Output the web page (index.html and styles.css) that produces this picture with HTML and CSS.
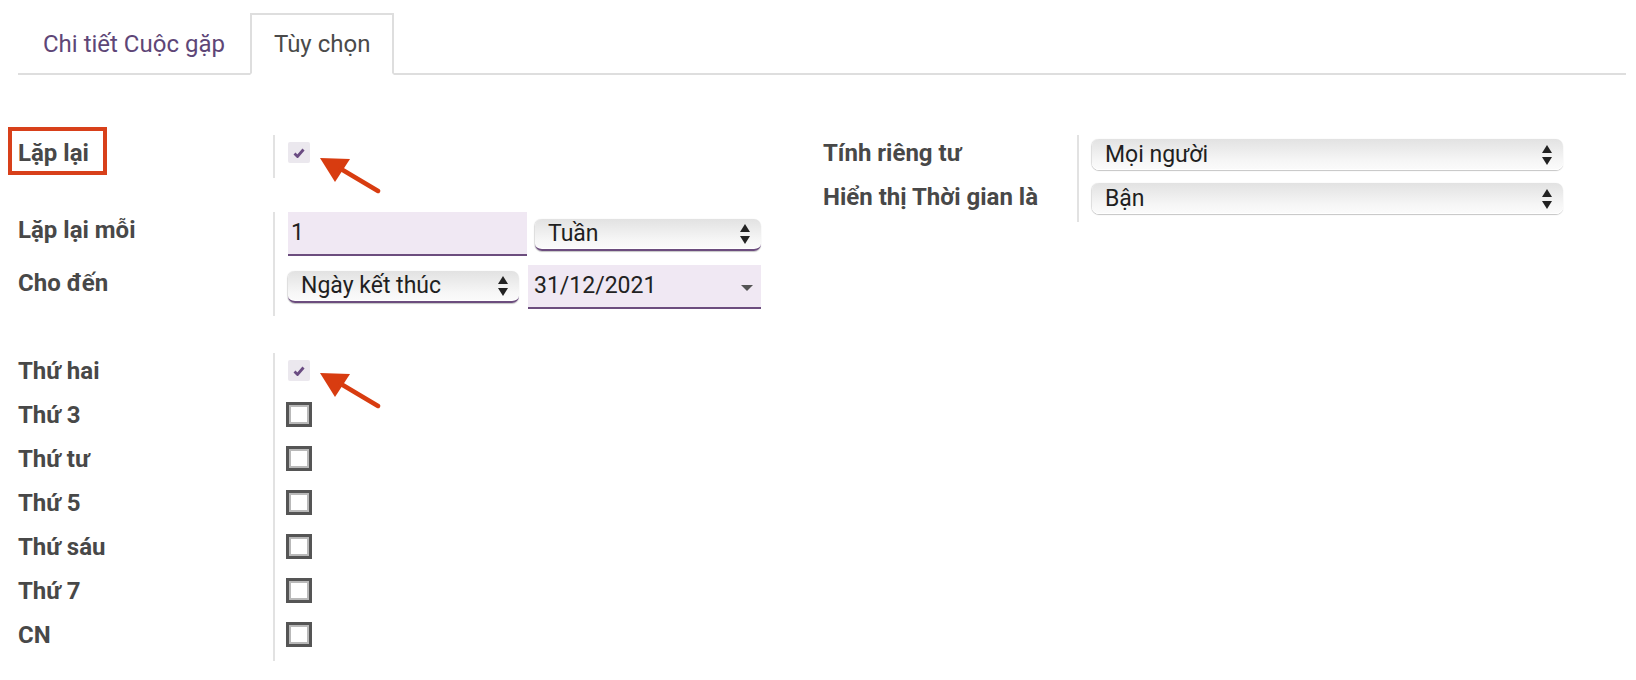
FILE: index.html
```html
<!DOCTYPE html>
<html lang="vi">
<head>
<meta charset="utf-8">
<title>Tùy chọn</title>
<link rel="stylesheet" href="styles.css">
</head>
<body>
<div class="sheet">
  <ul class="tabs">
    <li class="tab">Chi tiết Cuộc gặp</li>
    <li class="tab active">Tùy chọn</li>
  </ul>

  <div class="content">
    <div class="col col-left">
      <div class="group g-repeat">
        <div class="row r-43">
          <div class="lbl"><span class="highlight">Lặp lại</span></div>
          <div class="fld">
            <span class="check on"><svg viewBox="0 0 12 10" width="12" height="10"><polyline points="1.5,5.5 4.5,8.5 10.5,1.5" fill="none" stroke="#6a4c82" stroke-width="2.8"/></svg></span>
            <svg class="arrow a1" viewBox="0 0 62 38" width="62" height="38"><polygon points="1,1 31,2 16,25" fill="#d83c10"/><line x1="22" y1="12" x2="59" y2="34" stroke="#d83c10" stroke-width="4.5" stroke-linecap="round"/></svg>
          </div>
        </div>
      </div>

      <div class="group g-interval">
        <div class="row r-53">
          <div class="lbl">Lặp lại mỗi</div>
          <div class="fld fld-pair">
            <div class="input w-239">1</div>
            <div class="select req w-226 s-top7">Tuần<svg class="updown" viewBox="0 0 10 20" width="10" height="20"><polygon points="0,8 5,0 10,8" fill="#222"/><polygon points="0,12 10,12 5,20" fill="#222"/></svg></div>
          </div>
        </div>
        <div class="row r-51">
          <div class="lbl">Cho đến</div>
          <div class="fld fld-pair">
            <div class="select req w-231 s-top6">Ngày kết thúc<svg class="updown" viewBox="0 0 10 20" width="10" height="20"><polygon points="0,8 5,0 10,8" fill="#222"/><polygon points="0,12 10,12 5,20" fill="#222"/></svg></div>
            <div class="input date w-233">31/12/2021<span class="caret"></span></div>
          </div>
        </div>
      </div>

      <div class="group g-days">
        <div class="row r-44">
          <div class="lbl">Thứ hai</div>
          <div class="fld">
            <span class="check on"><svg viewBox="0 0 12 10" width="12" height="10"><polyline points="1.5,5.5 4.5,8.5 10.5,1.5" fill="none" stroke="#6a4c82" stroke-width="2.8"/></svg></span>
            <svg class="arrow a2" viewBox="0 0 62 38" width="62" height="38"><polygon points="1,1 31,2 16,25" fill="#d83c10"/><line x1="22" y1="12" x2="59" y2="34" stroke="#d83c10" stroke-width="4.5" stroke-linecap="round"/></svg>
          </div>
        </div>
        <div class="row r-44"><div class="lbl">Thứ 3</div><div class="fld"><span class="check off"></span></div></div>
        <div class="row r-44"><div class="lbl">Thứ tư</div><div class="fld"><span class="check off"></span></div></div>
        <div class="row r-44"><div class="lbl">Thứ 5</div><div class="fld"><span class="check off"></span></div></div>
        <div class="row r-44"><div class="lbl">Thứ sáu</div><div class="fld"><span class="check off"></span></div></div>
        <div class="row r-44"><div class="lbl">Thứ 7</div><div class="fld"><span class="check off"></span></div></div>
        <div class="row r-44"><div class="lbl">CN</div><div class="fld"><span class="check off"></span></div></div>
      </div>
    </div>

    <div class="col col-right">
      <div class="group g-privacy">
        <div class="row r-44">
          <div class="lbl">Tính riêng tư</div>
          <div class="fld"><div class="select wide s-top4">Mọi người<svg class="updown" viewBox="0 0 10 20" width="10" height="20"><polygon points="0,8 5,0 10,8" fill="#222"/><polygon points="0,12 10,12 5,20" fill="#222"/></svg></div></div>
        </div>
        <div class="row r-43">
          <div class="lbl">Hiển thị Thời gian là</div>
          <div class="fld"><div class="select wide s-top4">Bận<svg class="updown" viewBox="0 0 10 20" width="10" height="20"><polygon points="0,8 5,0 10,8" fill="#222"/><polygon points="0,12 10,12 5,20" fill="#222"/></svg></div></div>
        </div>
      </div>
    </div>
  </div>
</div>
</body>
</html>
```

FILE: styles.css
```css
* { box-sizing: border-box; }

html, body {
  margin: 0;
  padding: 0;
  background: #fff;
}

body {
  font-family: Roboto, "Noto Sans", "Liberation Sans", sans-serif;
  font-size: 24px;
  color: #222;
}

.sheet {
  width: 1636px;
  height: 680px;
  overflow: hidden;
}

/* Tabs */
.tabs {
  list-style: none;
  margin: 13px 10px 0 18px;
  padding: 0 0 0 1px;
  display: flex;
  border-bottom: 2px solid #dedede;
}

.tab {
  padding: 11px 22px;
  line-height: 36px;
  border: 2px solid transparent;
  margin: 0 1px -2px 0;
  color: #5e4677;
}

.tab.active {
  color: #4a4a4a;
  background: #fff;
  border-color: #dedede;
  border-bottom-color: #fff;
}

/* Content */
.content {
  display: flex;
  padding-left: 18px;
}

.col-left { width: 805px; }
.col-right { width: 740px; }

.group { display: flex; flex-direction: column; }
.g-repeat { margin-top: 60px; }
.g-interval { margin-top: 34px; }
.g-days { margin-top: 37px; }
.g-privacy { margin-top: 60px; }

.row {
  display: grid;
  grid-template-columns: 255px 1fr;
}
.col-right .row { grid-template-columns: 254px 1fr; }

.r-43 { height: 43px; }
.r-44 { height: 44px; }
.r-51 { height: 51px; }
.r-53 { height: 53px; }

.lbl {
  font-weight: 700;
  color: #484848;
  line-height: 36px;
  white-space: nowrap;
}

.fld {
  border-left: 2px solid #e2e2e2;
  padding-left: 13px;
  position: relative;
}

.fld-pair {
  display: flex;
  align-items: flex-start;
}

/* Highlight annotation */
.highlight {
  display: block;
  width: fit-content;
  margin: -8px 0 0 -10px;
  padding: 4px 14px 0 6px;
  border: 4px solid #d8401a;
}

/* Checkboxes */
.check {
  display: flex;
  align-items: center;
  justify-content: center;
}
.check.on {
  width: 22px;
  height: 21px;
  margin-top: 7px;
  background: #ebe8ee;
  border-radius: 2px;
}
.check.off {
  width: 26px;
  height: 25px;
  margin-top: 5px;
  margin-left: -2px;
  background: #fff;
  border: 3px solid #555;
  box-shadow: inset 0 0 0 2px #b9b9b9;
}

.arrow {
  position: absolute;
  left: 44px;
  top: 22px;
}
.arrow.a2 { top: 19px; }

/* Inputs */
.input {
  height: 44px;
  background: #f0e8f3;
  border-bottom: 2px solid #6c4d7e;
  font-size: 23px;
  line-height: 42px;
  padding-left: 3px;
  position: relative;
}
.input.date { padding-left: 6px; }

.w-239 { width: 239px; margin-right: 8px; }
.w-226 { width: 226px; }
.w-231 { width: 231px; margin-right: 9px; }
.w-233 { width: 233px; }

.caret {
  position: absolute;
  right: 8px;
  top: 20px;
  width: 0;
  height: 0;
  border-left: 6px solid transparent;
  border-right: 6px solid transparent;
  border-top: 6px solid #555;
}

/* Selects (native mac look) */
.select {
  position: relative;
  height: 32px;
  font-size: 23px;
  line-height: 31px;
  padding-left: 13px;
  border-radius: 7px;
  background: linear-gradient(to bottom, #e2e2e2 0%, #ececec 35%, #f6f6f6 70%, #fbfbfb 100%);
  box-shadow: 0 1px 1px rgba(0, 0, 0, 0.22), -1px 0 1px rgba(0, 0, 0, 0.12), inset 0 -1px 0 #fff;
  color: #1f1f1f;
}
.select.req {
  border-bottom: 2px solid #6c4d7e;
  line-height: 30px;
}
.select.wide {
  width: 471px;
  height: 31px;
  line-height: 31px;
}
.s-top7 { margin-top: 7px; }
.s-top6 { margin-top: 6px; }
.s-top4 { margin-top: 4px; }

.updown {
  position: absolute;
  right: 11px;
  top: 50%;
  margin-top: -10px;
}
```
